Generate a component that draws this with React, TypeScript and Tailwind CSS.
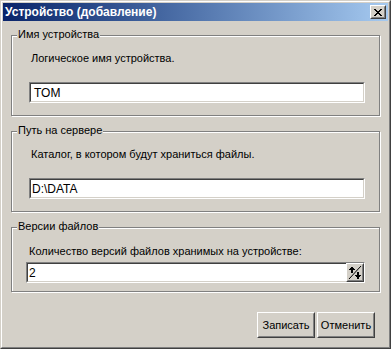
import React from "react";

const font = "font-['Liberation_Sans',Arial,sans-serif]";

const Sunken = ({ children, className = "" }: { children: React.ReactNode; className?: string }) => (
  <div className={`border border-t-[#808080] border-l-[#808080] border-b-white border-r-white ${className}`}>
    <div className="h-full border border-t-[#404040] border-l-[#404040] border-b-[#d4d0c8] border-r-[#d4d0c8] bg-white flex items-center">
      {children}
    </div>
  </div>
);

const Raised = ({ children, className = "" }: { children: React.ReactNode; className?: string }) => (
  <div className={`border border-t-white border-l-white border-b-[#404040] border-r-[#404040] bg-[#d4d0c8] ${className}`}>
    <div className="h-full border border-t-[#d4d0c8] border-l-[#d4d0c8] border-b-[#808080] border-r-[#808080] flex items-center justify-center">
      {children}
    </div>
  </div>
);

const Group = ({
  title,
  children,
  className = "",
}: {
  title: string;
  children: React.ReactNode;
  className?: string;
}) => (
  <div
    className={`relative border border-[#808080] shadow-[inset_1px_1px_0_#fff,1px_1px_0_#fff] ${className}`}
  >
    <span className="absolute left-[5px] top-[-8px] px-[1px] bg-[#d4d0c8] leading-[13px]">{title}</span>
    {children}
  </div>
);

const SpinGlyph = () => (
  <svg width="14" height="15" viewBox="0 0 14 15" shapeRendering="crispEdges">
    <path d="M1 14 L13 1" stroke="#000" strokeWidth="1" shapeRendering="auto" />
    {/* up arrow */}
    <rect x="3" y="2" width="2" height="6" fill="#000" />
    <rect x="2" y="3" width="4" height="1" fill="#000" />
    <rect x="1" y="4" width="6" height="1" fill="#000" />
    {/* down arrow */}
    <rect x="9" y="7" width="2" height="6" fill="#000" />
    <rect x="7" y="10" width="6" height="1" fill="#000" />
    <rect x="8" y="11" width="4" height="1" fill="#000" />
    <rect x="9" y="12" width="2" height="2" fill="#000" />
  </svg>
);

export default function App() {
  return (
    <div className={`w-[391px] h-[349px] bg-[#d4d0c8] text-[11px] text-black ${font}`}>
      <div className="h-full border border-t-[#d4d0c8] border-l-[#d4d0c8] border-b-[#404040] border-r-[#404040]">
        <div className="h-full border border-t-white border-l-white border-b-[#808080] border-r-[#808080] p-[1px] flex flex-col">
          {/* Title bar */}
          <div className="h-[18px] flex items-center justify-between bg-gradient-to-r from-[#0a246a] to-[#a6caf0] pl-[2px] pr-[2px]">
            <span className="text-white font-bold text-[12px] leading-[14px]">Устройство (добавление)</span>
            <Raised className="w-[16px] h-[14px]">
              <svg width="8" height="7" viewBox="0 0 8 7" shapeRendering="crispEdges">
                <path
                  d="M0 0h2v1h-2z M6 0h2v1h-2z M1 1h2v1h-2z M5 1h2v1h-2z M2 2h4v1h-4z M3 3h2v1h-2z M2 4h4v1h-4z M1 5h2v1h-2z M5 5h2v1h-2z M0 6h2v1h-2z M6 6h2v1h-2z"
                  fill="#000"
                />
              </svg>
            </Raised>
          </div>

          {/* Body */}
          <div className="flex flex-col px-[8px] pt-[14px] gap-[15px]">
            <Group title="Имя устройства" className="h-[81px] pt-[16px]">
              <div className="pl-[19px] leading-[13px]">Логическое имя устройства.</div>
              <Sunken className="ml-[17px] mr-[14px] mt-[17px] h-[21px]">
                <span className="pl-[3px] text-[12px]">TOM</span>
              </Sunken>
            </Group>

            <Group title="Путь на сервере" className="h-[81px] pt-[16px]">
              <div className="pl-[19px] leading-[13px]">Каталог, в котором будут храниться файлы.</div>
              <Sunken className="ml-[17px] mr-[14px] mt-[17px] h-[21px]">
                <span className="pl-[1px] text-[12px]">D:\DATA</span>
              </Sunken>
            </Group>

            <Group title="Версии файлов" className="h-[65px] pt-[17px]">
              <div className="pl-[17px] leading-[13px]">Количество версий файлов хранимых на устройстве:</div>
              <Sunken className="ml-[14px] mr-[14px] mt-[4px] h-[21px]">
                <span className="flex-1 pl-[1px] text-[12px]">2</span>
                <Raised className="w-[18px] h-[19px] -mr-[1px]">
                  <SpinGlyph />
                </Raised>
              </Sunken>
            </Group>
          </div>

          {/* Buttons */}
          <div className="flex justify-end gap-[2px] pr-[13px] mt-[20px]">
            <Raised className="w-[58px] h-[26px]">
              <span>Записать</span>
            </Raised>
            <Raised className="w-[58px] h-[26px]">
              <span>Отменить</span>
            </Raised>
          </div>
        </div>
      </div>
    </div>
  );
}
